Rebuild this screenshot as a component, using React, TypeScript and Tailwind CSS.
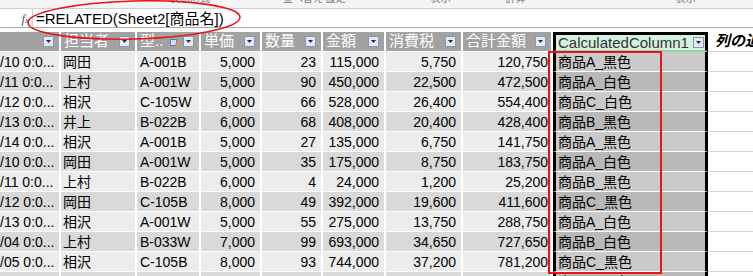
import React from 'react';

type Row = {
    d: string;
    who: string;
    model: string;
    price: string;
    qty: string;
    amount: string;
    tax: string;
    total: string;
    name: string;
};

const rows: Row[] = [
    { d: '/10 0:0...', who: '岡田', model: 'A-001B', price: '5,000', qty: '23', amount: '115,000', tax: '5,750', total: '120,750', name: '商品A_黒色' },
    { d: '/11 0:0...', who: '上村', model: 'A-001W', price: '5,000', qty: '90', amount: '450,000', tax: '22,500', total: '472,500', name: '商品A_白色' },
    { d: '/12 0:0...', who: '相沢', model: 'C-105W', price: '8,000', qty: '66', amount: '528,000', tax: '26,400', total: '554,400', name: '商品C_白色' },
    { d: '/13 0:0...', who: '井上', model: 'B-022B', price: '6,000', qty: '68', amount: '408,000', tax: '20,400', total: '428,400', name: '商品B_黒色' },
    { d: '/14 0:0...', who: '相沢', model: 'A-001B', price: '5,000', qty: '27', amount: '135,000', tax: '6,750', total: '141,750', name: '商品A_黒色' },
    { d: '/10 0:0...', who: '岡田', model: 'A-001W', price: '5,000', qty: '35', amount: '175,000', tax: '8,750', total: '183,750', name: '商品A_白色' },
    { d: '/11 0:0...', who: '上村', model: 'B-022B', price: '6,000', qty: '4', amount: '24,000', tax: '1,200', total: '25,200', name: '商品B_黒色' },
    { d: '/12 0:0...', who: '岡田', model: 'C-105B', price: '8,000', qty: '49', amount: '392,000', tax: '19,600', total: '411,600', name: '商品C_黒色' },
    { d: '/13 0:0...', who: '相沢', model: 'A-001W', price: '5,000', qty: '55', amount: '275,000', tax: '13,750', total: '288,750', name: '商品A_白色' },
    { d: '/04 0:0...', who: '上村', model: 'B-033W', price: '7,000', qty: '99', amount: '693,000', tax: '34,650', total: '727,650', name: '商品B_白色' },
    { d: '/05 0:0...', who: '相沢', model: 'C-105B', price: '8,000', qty: '93', amount: '744,000', tax: '37,200', total: '781,200', name: '商品C_黒色' },
    { d: '/06 0:0...', who: '岡田', model: 'A-001B', price: '5,000', qty: '12', amount: '60,000', tax: '3,000', total: '63,000', name: '商品A_黒色' },
];

function DropButton() {
    return (
        <span className="w-[11px] h-[11px] border border-[#8b97ad] bg-[#e4e8f0] flex items-center justify-center shrink-0">
            <svg width="5" height="3" viewBox="0 0 5 3">
                <path d="M0 0h5L2.5 3z" fill="#1d2b57" />
            </svg>
        </span>
    );
}

function HeadCell({ w, label, extra }: { w: string; label: string; extra?: React.ReactNode }) {
    return (
        <div className={`${w} h-[20px] bg-[#a2a2a2] border-r-2 border-b border-white flex items-center justify-between pl-[3px] pr-[5px] text-white text-[15px] overflow-hidden whitespace-nowrap`}>
            <span>{label}</span>
            <span className="flex items-center gap-[3px]">
                {extra}
                <DropButton />
            </span>
        </div>
    );
}

export default function App() {
    return (
        <div className="relative w-[753px] h-[276px] overflow-hidden bg-white font-['Liberation_Sans','Noto_Sans_CJK_JP',sans-serif] text-[14px] text-black">
            {/* ribbon remnant, only the bottoms of the group labels show */}
            <div className="h-[9px] overflow-hidden bg-[#f4f4f4] border-b border-[#cfcfcf] flex items-start text-[10px] leading-[10px] text-[#777] whitespace-nowrap">
                <span className="ml-[170px] -mt-[6px]">表示形式</span>
                <span className="ml-[73px] -mt-[6px]">並べ替え 設定</span>
                <span className="ml-[85px] -mt-[6px]">表示</span>
                <span className="ml-[55px] -mt-[6px]">計算</span>
                <span className="ml-[150px] -mt-[6px]">表示</span>
            </div>

            {/* formula bar */}
            <div className="h-[19px] flex border-b border-[#a9a9a9]">
                <div className="w-[33px] border-r border-[#d0d0d0] flex items-center justify-end pr-[3px]">
                    <span className="font-['Liberation_Serif',serif] italic text-[13px] text-[#555] leading-none">f<span className="text-[9px]">x</span></span>
                </div>
                <div className="pl-[3px] flex items-center text-[15px] leading-none whitespace-nowrap">=RELATED(Sheet2[商品名])</div>
            </div>
            <div className="h-[4px]" />

            {/* header row */}
            <div className="flex">
                <HeadCell w="w-[61px]" label="" />
                <HeadCell w="w-[76px]" label="担当者" />
                <HeadCell
                    w="w-[64px]"
                    label="型.."
                    extra={
                        <svg width="10" height="10" viewBox="0 0 10 10">
                            <rect x="0.5" y="2.5" width="6" height="6" fill="#cfe0f5" stroke="#5b7fb5" />
                            <circle cx="7.5" cy="7" r="2" fill="#e8962f" />
                        </svg>
                    }
                />
                <HeadCell w="w-[61px]" label="単価" />
                <HeadCell w="w-[61px]" label="数量" />
                <HeadCell w="w-[63px]" label="金額" />
                <HeadCell w="w-[77px]" label="消費税" />
                <HeadCell w="w-[90px]" label="合計金額" />
                <div className="w-[155px] h-[20px] border-x-[3px] border-t-[3px] border-x-black border-t-black border-b-2 border-b-[#8fd6a5] bg-[#d6f0de] flex items-center justify-between pl-[2px] pr-[1px] text-[15px] text-[#333] leading-none">
                    <span>CalculatedColumn1</span>
                    <DropButton />
                </div>
                <div className="flex-1 h-[20px] border-b border-[#d4d4d4] flex items-center pl-[7px] text-[15px] font-bold italic whitespace-nowrap overflow-hidden">
                    列の追加
                </div>
            </div>

            {/* data rows */}
            {rows.map((r, i) => {
                const bg = i % 2 === 0 ? 'bg-[#ececec]' : 'bg-[#d9d9d9]';
                const calcBg = i % 2 === 0 ? 'bg-[#cacaca]' : 'bg-[#b8b8b8]';
                return (
                    <div key={i} className="flex h-[20px] whitespace-nowrap leading-none">
                        <div className={`w-[61px] ${bg} border-r-2 border-b border-white flex items-center overflow-hidden`}>{r.d}</div>
                        <div className={`w-[76px] ${bg} border-r-2 border-b border-white flex items-center pl-[2px]`}>{r.who}</div>
                        <div className={`w-[64px] ${bg} border-r-2 border-b border-white flex items-center pl-[3px]`}>{r.model}</div>
                        <div className={`w-[61px] ${bg} border-r-2 border-b border-white flex items-center justify-end pr-[5px]`}>{r.price}</div>
                        <div className={`w-[61px] ${bg} border-r-2 border-b border-white flex items-center justify-end pr-[5px]`}>{r.qty}</div>
                        <div className={`w-[63px] ${bg} border-r-2 border-b border-white flex items-center justify-end pr-[5px]`}>{r.amount}</div>
                        <div className={`w-[77px] ${bg} border-r-2 border-b border-white flex items-center justify-end pr-[5px]`}>{r.tax}</div>
                        <div className={`w-[90px] ${bg} border-r-2 border-b border-white flex items-center justify-end pr-[3px]`}>{r.total}</div>
                        <div className={`w-[155px] ${calcBg} border-x-[3px] border-x-black border-b border-b-white flex items-center pl-[2px]`}>{r.name}</div>
                        <div className="flex-1 border-b border-[#d4d4d4]" />
                    </div>
                );
            })}

            {/* annotations */}
            <div className="absolute left-[548px] top-[51px] w-[114px] h-[223px] border-2 border-[#e8141b]" />
            <svg className="absolute left-0 top-0" width="260" height="42" viewBox="0 0 260 42">
                <ellipse cx="134" cy="20" rx="106" ry="19" fill="none" stroke="#e8141b" strokeWidth="1.6" transform="rotate(-1.5 134 20)" />
            </svg>
        </div>
    );
}
